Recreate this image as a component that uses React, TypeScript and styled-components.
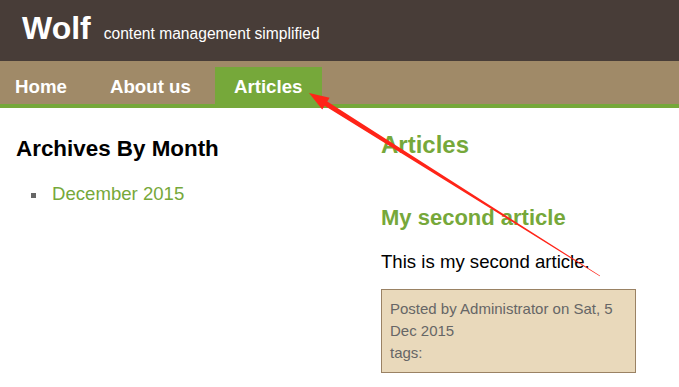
import React from 'react';
import styled, { createGlobalStyle } from 'styled-components';

const GlobalStyle = createGlobalStyle`
  html, body {
    margin: 0;
    padding: 0;
    background: #fff;
  }
  body {
    font-family: "Liberation Sans", Arial, sans-serif;
    color: #000;
  }
`;

const Page = styled.div`
  position: relative;
  width: 679px;
  height: 387px;
  overflow: hidden;
`;

const Header = styled.header`
  display: flex;
  align-items: baseline;
  height: 61px;
  padding: 0 0 0 22px;
  box-sizing: border-box;
  background: #483d38;
  color: #fff;
`;

const Logo = styled.h1`
  margin: 0;
  padding-top: 8px;
  font-size: 32px;
  line-height: 40px;
  font-weight: bold;
`;

const Tagline = styled.span`
  margin-left: 13px;
  font-size: 15.6px;
`;

const Nav = styled.nav`
  display: flex;
  align-items: flex-end;
  gap: 4px;
  height: 43px;
  background: #a08a68;
  border-bottom: 4px solid #76a83a;
`;

const NavLink = styled.a<{ $active?: boolean }>`
  display: flex;
  align-items: center;
  height: 37px;
  padding: 2px 20px 0 19px;
  box-sizing: border-box;
  background: ${(p) => (p.$active ? '#76a83a' : 'transparent')};
  color: #fff;
  font-size: 18.7px;
  font-weight: bold;
  text-decoration: none;
  &:first-child {
    padding-left: 15px;
  }
`;

const Main = styled.main`
  display: grid;
  grid-template-columns: 381px 1fr;
`;

const Sidebar = styled.aside`
  padding: 26px 0 0 16px;
`;

const SideTitle = styled.h2`
  margin: 0;
  font-size: 22.4px;
  line-height: 30px;
  font-weight: bold;
`;

const MonthList = styled.ul`
  margin: 18px 0 0;
  padding: 0 0 0 15px;
  list-style: none;
`;

const MonthItem = styled.li`
  display: flex;
  align-items: center;
  &::before {
    content: '';
    width: 5px;
    height: 5px;
    margin: 2px 16px 0 0;
    background: #666;
  }
`;

const MonthLink = styled.a`
  color: #76a83a;
  font-size: 18.6px;
  line-height: 24px;
  text-decoration: none;
`;

const Content = styled.section`
  padding-top: 20px;
`;

const PageTitle = styled.h1`
  margin: 0;
  color: #76a83a;
  font-size: 24px;
  line-height: 34px;
  font-weight: bold;
`;

const ArticleTitle = styled.h2`
  margin: 41px 0 0;
  color: #76a83a;
  font-size: 22px;
  line-height: 30px;
  font-weight: bold;
`;

const ArticleBody = styled.p`
  margin: 17px 0 0;
  font-size: 18.6px;
  line-height: 24px;
`;

const Meta = styled.div`
  width: 255px;
  margin-top: 15px;
  padding: 8px 8px 8px;
  box-sizing: border-box;
  background: #e9d9bb;
  border: 1px solid #9a8264;
  color: #666;
  font-size: 15px;
  line-height: 22px;
`;

const Overlay = styled.svg`
  position: absolute;
  top: 0;
  left: 0;
  pointer-events: none;
`;

function Arrow() {
  const tip = [309, 93];
  const tail = [600, 276];
  const dx = tail[0] - tip[0];
  const dy = tail[1] - tip[1];
  const len = Math.hypot(dx, dy);
  const u = [dx / len, dy / len];
  const n = [-u[1], u[0]];
  const head = 20;
  const base = [tip[0] + u[0] * head, tip[1] + u[1] * head];
  const at = (c: number[], w: number) => `${c[0] + n[0] * w},${c[1] + n[1] * w}`;
  const points = [
    `${tip[0]},${tip[1]}`,
    at(base, 7),
    at(base, 2.5),
    at(tail, 0.3),
    at(tail, -0.3),
    at(base, -2.5),
    at(base, -7),
  ].join(' ');
  return (
    <Overlay width="679" height="387">
      <polygon points={points} fill="#ff2418" />
    </Overlay>
  );
}

export default function App() {
  return (
    <Page>
      <GlobalStyle />
      <Header>
        <Logo>Wolf</Logo>
        <Tagline>content management simplified</Tagline>
      </Header>
      <Nav>
        <NavLink href="#">Home</NavLink>
        <NavLink href="#">About us</NavLink>
        <NavLink href="#" $active>
          Articles
        </NavLink>
      </Nav>
      <Main>
        <Sidebar>
          <SideTitle>Archives By Month</SideTitle>
          <MonthList>
            <MonthItem>
              <MonthLink href="#">December 2015</MonthLink>
            </MonthItem>
          </MonthList>
        </Sidebar>
        <Content>
          <PageTitle>Articles</PageTitle>
          <ArticleTitle>My second article</ArticleTitle>
          <ArticleBody>This is my second article.</ArticleBody>
          <Meta>
            Posted by Administrator on Sat, 5 Dec 2015
            <br />
            tags:
          </Meta>
        </Content>
      </Main>
      <Arrow />
    </Page>
  );
}
